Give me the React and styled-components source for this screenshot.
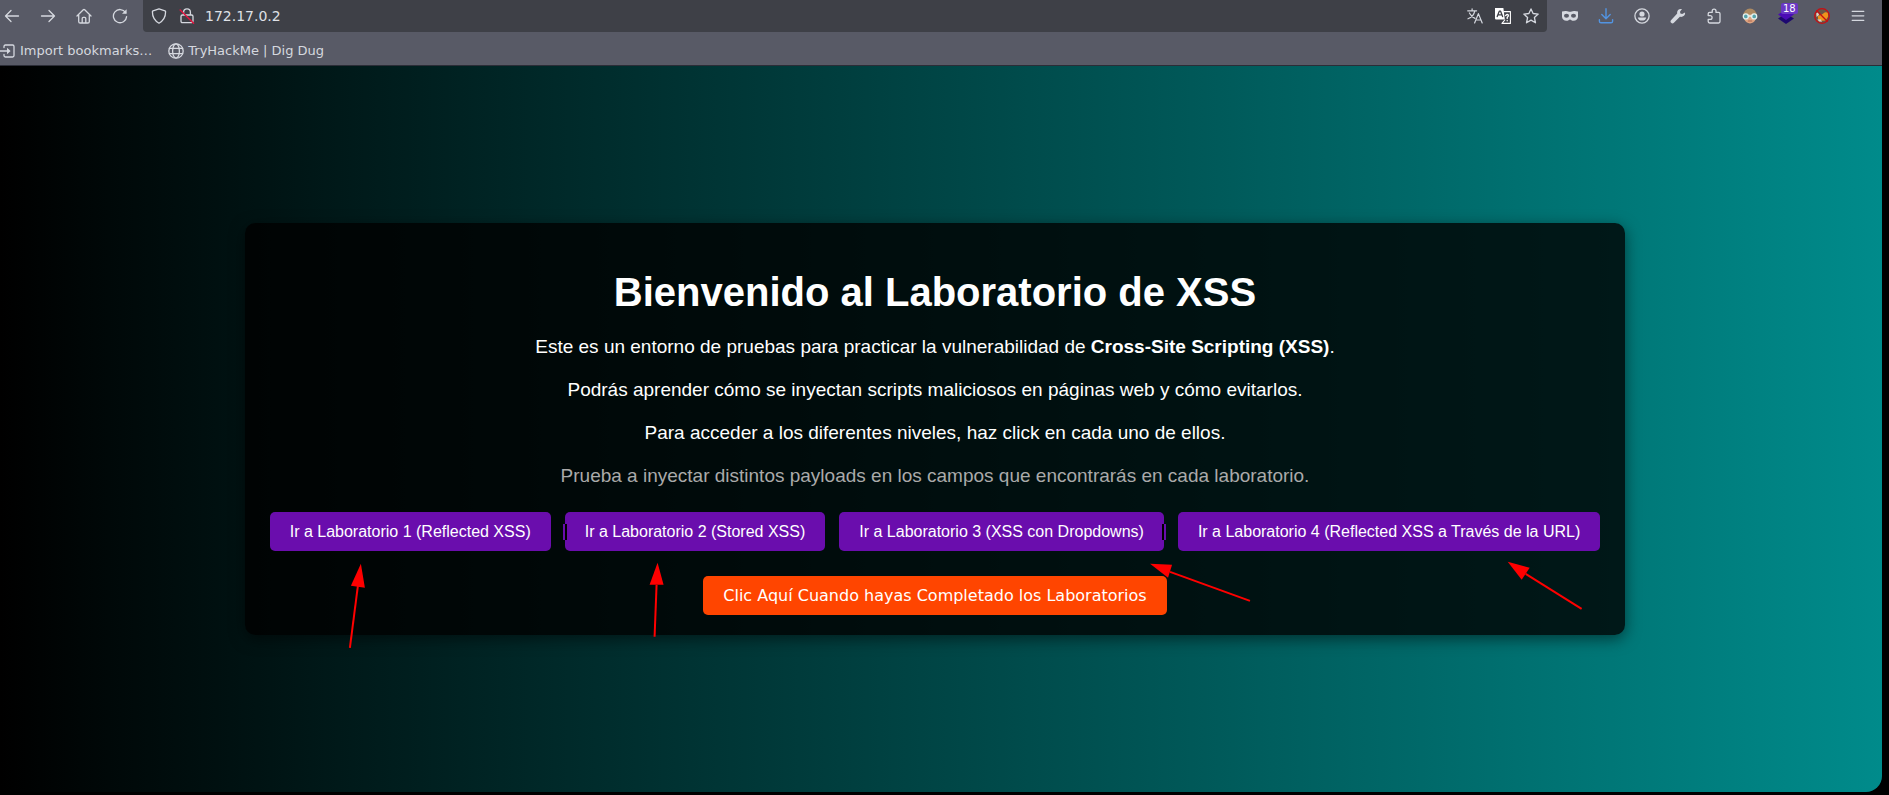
import React from "react";
import styled, { createGlobalStyle, css } from "styled-components";

const GlobalStyle = createGlobalStyle`
  *, *::before, *::after { box-sizing: border-box; }
  body { margin: 0; background: #000; }
  button, input { font: inherit; }
`;

const Window = styled.div`
  display: flex;
  flex-direction: column;
  min-height: 100vh;
  padding: 0 7px 3px 0;
  background: #000;
`;

const Chrome = styled.header`
  background: #585a66;
  border-bottom: 1px solid #2b2d37;
  color: #d5d8df;
  font-family: "DejaVu Sans", sans-serif;
`;

const Toolbar = styled.div`
  display: flex;
  align-items: center;
  height: 32px;
  padding-right: 12px;
`;

const ToolGroup = styled.nav`
  display: flex;
  gap: 12px;
  flex: none;
`;

const IconButton = styled.button`
  position: relative;
  display: flex;
  align-items: center;
  justify-content: center;
  flex: none;
  width: 24px;
  height: 24px;
  padding: 0;
  border: 0;
  background: transparent;
  color: ${(p) => p.$color || "#d5d8df"};
  cursor: pointer;
`;

const Badge = styled.span`
  position: absolute;
  top: -1px;
  left: 7px;
  padding: 0 2px;
  border-radius: 2px;
  background: #6a38c4;
  color: #fff;
  font-size: 10px;
  line-height: 11px;
`;

const AddressBar = styled.form`
  display: flex;
  align-items: center;
  flex: 1;
  gap: 4px;
  height: 32px;
  margin: 0 11px;
  padding: 0 4px;
  border-radius: 0 0 4px 4px;
  background: #3e4047;
`;

const AddressInput = styled.input`
  flex: 1;
  min-width: 0;
  height: 24px;
  padding: 0 2px;
  border: 0;
  outline: 0;
  background: transparent;
  color: #dfe1e6;
  font-size: 14px;
`;

const Bookmarks = styled.nav`
  display: flex;
  align-items: center;
  gap: 16px;
  height: 33px;
  padding-top: 4px;
`;

const Bookmark = styled.a`
  display: flex;
  align-items: center;
  gap: 4px;
  color: inherit;
  font-size: 13px;
  line-height: 16px;
  text-decoration: none;
`;

const Page = styled.main`
  display: flex;
  align-items: center;
  justify-content: center;
  flex: 1;
  padding-right: 12px;
  border-radius: 0 0 16px 0;
  background: linear-gradient(90deg, #000, #008b8b);
  color: #fff;
  font-family: "Liberation Sans", Arial, sans-serif;
`;

const Card = styled.section`
  position: relative;
  display: flex;
  flex-direction: column;
  align-items: center;
  padding: 46px 25px 20px;
  border-radius: 10px;
  background: rgba(0, 0, 0, 0.8);
  box-shadow: 0 4px 15px rgba(0, 0, 0, 0.5);
  text-align: center;
`;

const Title = styled.h1`
  margin: 0 0 20px;
  font-size: 40px;
  line-height: 46px;
`;

const Paragraph = styled.p`
  margin: 0 0 20px;
  color: ${(p) => (p.$muted ? "#aaa" : "#fff")};
  font-size: 19px;
  line-height: 23px;
`;

const LabList = styled.div`
  display: flex;
  gap: 14px;
  margin: 5px 0 25px;
`;

const action = css`
  padding: 10px 20px;
  border: 0;
  border-radius: 5px;
  color: #fff;
  font-size: 16px;
  line-height: 19px;
  white-space: nowrap;
  cursor: pointer;
`;

const tick = {
  left: css`
    left: -2px;
    border-left: 2px solid #6a0dad;
    border-right: 2px solid #000;
  `,
  right: css`
    right: -2px;
    border-left: 2px solid #000;
    border-right: 2px solid #6a0dad;
  `,
};

const LabButton = styled.button`
  ${action}
  position: relative;
  background: #6a0dad;

  ${(p) =>
    p.$tick &&
    css`
      &::before {
        content: "";
        position: absolute;
        top: 12px;
        width: 4px;
        height: 16px;
        ${tick[p.$tick]}
      }
    `}
`;

const FinishButton = styled.button`
  ${action}
  background: #ff4500;
  font-family: "DejaVu Sans", sans-serif;
`;

const ArrowLayer = styled.svg`
  position: absolute;
  inset: 0;
  width: 100%;
  height: 100%;
  overflow: visible;
  pointer-events: none;
`;

const Svg = ({ children, ...rest }) => (
  <svg
    width="16"
    height="16"
    viewBox="0 0 16 16"
    fill="none"
    stroke="currentColor"
    strokeWidth="1.3"
    strokeLinecap="round"
    strokeLinejoin="round"
    aria-hidden="true"
    {...rest}
  >
    {children}
  </svg>
);

const Back = () => (
  <Svg><path d="M14.5 8H1.5M7 2.5L1.5 8L7 13.5" /></Svg>
);
const Forward = () => (
  <Svg><path d="M1.5 8H14.5M9 2.5L14.5 8L9 13.5" /></Svg>
);
const Home = () => (
  <Svg>
    <path d="M1 8L7.3 1.7Q8 1 8.7 1.7L15 8M2.7 7V13.4Q2.7 15 4.3 15H11.7Q13.3 15 13.3 13.4V7M6.2 15V10.4Q6.2 9.4 7.2 9.4H8.8Q9.8 9.4 9.8 10.4V15" />
  </Svg>
);
const Reload = () => (
  <Svg>
    <path d="M13.6 4.6A6.6 6.6 0 1 0 14.6 8.6" />
    <path d="M14.6 1.2V5.8H10Z" fill="currentColor" stroke="none" />
  </Svg>
);
const Shield = () => (
  <Svg>
    <path d="M8 .8L14 2.8Q14.6 3 14.6 3.8C14.6 9.6 12 13 8 15.2C4 13 1.4 9.6 1.4 3.8Q1.4 3 2 2.8Z" />
  </Svg>
);
const BrokenLock = () => (
  <Svg>
    <path d="M4.6 7V4.2A3.4 3.4 0 0 1 11.4 4.2V7M3.4 7H12.6Q14 7 14 8.4V13.2Q14 14.6 12.6 14.6H3.4Q2 14.6 2 13.2V8.4Q2 7 3.4 7Z" />
    <path d="M1.2 2L14.6 15.2" stroke="#e2143f" strokeWidth="1.5" />
  </Svg>
);
const Translate = () => (
  <Svg strokeWidth="1.2">
    <path d="M.7 2.8H9.6M5.1 .8V2.8M2.4 5C4 8.2 6 9.6 8 10.4M7.8 2.8C7 6.8 4.2 9.6 1 10.8M7.6 15L11.4 5.6L15.2 15M8.8 12H14" />
  </Svg>
);
const PageTranslate = () => (
  <Svg stroke="none">
    <path d="M0 0H8.4L9.8 11.6H1Q0 11.6 0 10.6Z" fill="#fff" />
    <path d="M2.2 8.6L4.3 3.2H5.6L7.6 8.6M3 6.8H6.8" stroke="#3e4047" strokeWidth="1.3" />
    <path d="M9 3.6H15.4V15.4H7L9.8 12" stroke="#fff" strokeWidth="1.1" />
    <path d="M10.6 7.6Q12.2 5.6 13.4 7.2Q13.6 8.4 12.2 9.4V10.4M12.2 12.4V12.8" stroke="#fff" strokeWidth="1.3" />
  </Svg>
);
const Star = () => (
  <Svg>
    <path d="M8 .9L10.1 5.5L15.2 6.1L11.4 9.5L12.5 14.8L8 12.1L3.5 14.8L4.6 9.5L.8 6.1L5.9 5.5Z" />
  </Svg>
);
const Mask = () => (
  <Svg stroke="none">
    <path
      fill="currentColor"
      fillRule="evenodd"
      d="M0 3.4Q2 2.8 4 2.9C6 3 6.8 3.8 8 3.8S10 3 12 2.9Q14 2.8 16 3.4V8.2A4.4 4.4 0 0 1 11.6 12.8C9.6 12.8 9 11.4 8 11.4S6.4 12.8 4.4 12.8A4.4 4.4 0 0 1 0 8.2ZM2 7.8A2.5 2 0 0 0 7 7.8A2.5 2 0 0 0 2 7.8ZM9 7.8A2.5 2 0 0 0 14 7.8A2.5 2 0 0 0 9 7.8Z"
    />
  </Svg>
);
const Download = () => (
  <Svg strokeWidth="1.4">
    <path d="M8 .8V10.6M3.8 6.6L8 10.8L12.2 6.6M1.4 11.6V13.2Q1.4 14.8 3 14.8H13Q14.6 14.8 14.6 13.2V11.6" />
  </Svg>
);
const Account = () => (
  <Svg>
    <circle cx="8" cy="8" r="7.1" />
    <circle cx="8" cy="6" r="2.6" fill="currentColor" stroke="none" />
    <path d="M3.8 9.4H12.2Q11.4 12.6 8 12.6T3.8 9.4Z" fill="currentColor" stroke="none" />
  </Svg>
);
const Wrench = () => (
  <Svg stroke="none">
    <path
      fill="currentColor"
      d="M15 4.4L12.2 6L10.4 5.6L10 3.8L12 1.1C9 .2 6.6 2.4 7.2 5.6L1.2 12A1.9 1.9 0 0 0 3.9 14.8L9.9 8.8C13.2 9.4 15.6 7.4 15 4.4Z"
    />
  </Svg>
);
const Puzzle = () => (
  <Svg>
    <path d="M5 4.4H6.2V3A1.9 1.9 0 0 1 10 3V4.4H12.6Q14 4.4 14 5.8V13.6Q14 15 12.6 15H3.6Q2.2 15 2.2 13.6V11.4H4.2A1.9 1.9 0 0 0 4.2 7.6H2.2V5.8Q2.2 4.4 3.6 4.4H5" />
  </Svg>
);
const Face = () => (
  <Svg stroke="none">
    <ellipse cx="8" cy="7.2" rx="6.6" ry="6.6" fill="#ad8a62" />
    <path d="M2.2 6.6H13.8V11Q12 15.4 8 15.4T2.2 11Z" fill="#dea582" />
    <path d="M6.4 13H9.6" stroke="#b0664f" strokeWidth="1.2" />
    <g fill="#55a3aa" stroke="#e4f1ee" strokeWidth="1.3">
      <circle cx="3.8" cy="8.4" r="2.5" />
      <circle cx="12.2" cy="8.4" r="2.5" />
      <path d="M6.4 8H9.6" />
    </g>
  </Svg>
);
const Layers = () => (
  <Svg stroke="none">
    <path d="M0 10.4L8 5.6L16 10.4L8 16Z" fill="#1d0870" />
    <path d="M0 6.4L8 1.6L16 6.4L8 12Z" fill="#4b0bb5" />
  </Svg>
);
const BlockedFox = () => (
  <Svg>
    <circle cx="8" cy="8" r="7" fill="#6b5546" stroke="none" />
    <path d="M4 8L8 6.6L11 4.2L13.8 4.6L14.2 8.4L11.6 12.4L8 12.8L4 11Z" fill="#f0931c" stroke="none" />
    <path d="M2.2 5.4L4.4 4L5 7L2.6 9ZM3.4 11.2L7 11.6L8 13.8L5 13.6Z" fill="#ddd5c6" stroke="none" />
    <circle cx="8" cy="8" r="7.3" stroke="#c80d12" />
    <path d="M2.8 2.8L13.2 13.2" stroke="#c80d12" />
  </Svg>
);
const Menu = () => (
  <Svg><path d="M2.2 3.3H13.8M2.2 7.8H13.8M2.2 12.3H13.8" /></Svg>
);
const Import = () => (
  <Svg>
    <path d="M4 4.6V3.4Q4 2 5.4 2H12.6Q14 2 14 3.4V12.6Q14 14 12.6 14H5.4Q4 14 4 12.6V11.4M0 8H8" />
    <path d="M7 4.8L10.6 8L7 11.2Z" fill="currentColor" stroke="none" />
  </Svg>
);
const Globe = () => (
  <Svg>
    <circle cx="8" cy="8" r="7.2" />
    <ellipse cx="8" cy="8" rx="3.4" ry="7.2" />
    <path d="M1.4 5.4H14.6M1.4 10.6H14.6" />
  </Svg>
);

const navigation = [
  ["Back", Back],
  ["Forward", Forward],
  ["Home", Home],
  ["Reload", Reload],
];

const extensions = [
  { label: "Private mask", Icon: Mask },
  { label: "Downloads", Icon: Download, color: "#5294e2" },
  { label: "Account", Icon: Account },
  { label: "Developer tools", Icon: Wrench },
  { label: "Extensions", Icon: Puzzle },
  { label: "User agent", Icon: Face },
  { label: "Wappalyzer", Icon: Layers, badge: "18" },
  { label: "Proxy", Icon: BlockedFox },
  { label: "Menu", Icon: Menu },
];

const labs = [
  { text: "Ir a Laboratorio 1 (Reflected XSS)" },
  { text: "Ir a Laboratorio 2 (Stored XSS)", tick: "left" },
  { text: "Ir a Laboratorio 3 (XSS con Dropdowns)", tick: "right" },
  { text: "Ir a Laboratorio 4 (Reflected XSS a Través de la URL)" },
];

const arrows = [
  { shaft: "M105 425L113 363", head: "116,341 106,363 120,365" },
  { shaft: "M410 414L412 362", head: "413,340 405,362 419,362" },
  { shaft: "M1006 378L926 349", head: "906,341 928,342 924,355" },
  { shaft: "M1338 386L1282 351", head: "1264,339 1286,345 1278,357" },
];

export default function App() {
  return (
    <Window>
      <GlobalStyle />
      <Chrome>
        <Toolbar>
          <ToolGroup aria-label="Navigation">
            {navigation.map(([label, Icon]) => (
              <IconButton key={label} aria-label={label}>
                <Icon />
              </IconButton>
            ))}
          </ToolGroup>
          <AddressBar onSubmit={(e) => e.preventDefault()}>
            <IconButton type="button" aria-label="Tracking protection"><Shield /></IconButton>
            <IconButton type="button" aria-label="Connection not secure"><BrokenLock /></IconButton>
            <AddressInput aria-label="Address" defaultValue="172.17.0.2" />
            <IconButton type="button" aria-label="Translate"><Translate /></IconButton>
            <IconButton type="button" aria-label="Translate page"><PageTranslate /></IconButton>
            <IconButton type="button" aria-label="Bookmark this page"><Star /></IconButton>
          </AddressBar>
          <ToolGroup aria-label="Extensions">
            {extensions.map(({ label, Icon, color, badge }) => (
              <IconButton key={label} aria-label={label} $color={color}>
                <Icon />
                {badge && <Badge>{badge}</Badge>}
              </IconButton>
            ))}
          </ToolGroup>
        </Toolbar>
        <Bookmarks aria-label="Bookmarks">
          <Bookmark href="#import"><Import />Import bookmarks…</Bookmark>
          <Bookmark href="#digdug"><Globe />TryHackMe | Dig Dug</Bookmark>
        </Bookmarks>
      </Chrome>
      <Page>
        <Card>
          <Title>Bienvenido al Laboratorio de XSS</Title>
          <Paragraph>
            Este es un entorno de pruebas para practicar la vulnerabilidad de{" "}
            <strong>Cross-Site Scripting (XSS)</strong>.
          </Paragraph>
          <Paragraph>
            Podrás aprender cómo se inyectan scripts maliciosos en páginas web y cómo evitarlos.
          </Paragraph>
          <Paragraph>
            Para acceder a los diferentes niveles, haz click en cada uno de ellos.
          </Paragraph>
          <Paragraph $muted>
            Prueba a inyectar distintos payloads en los campos que encontrarás en cada laboratorio.
          </Paragraph>
          <LabList>
            {labs.map((lab) => (
              <LabButton key={lab.text} $tick={lab.tick}>{lab.text}</LabButton>
            ))}
          </LabList>
          <FinishButton>Clic Aquí Cuando hayas Completado los Laboratorios</FinishButton>
          <ArrowLayer viewBox="0 0 1382 412" aria-hidden="true">
            {arrows.map(({ shaft, head }) => (
              <g key={head}>
                <path d={shaft} stroke="#f00" strokeWidth="2" />
                <polygon points={head} fill="#f00" />
              </g>
            ))}
          </ArrowLayer>
        </Card>
      </Page>
    </Window>
  );
}
